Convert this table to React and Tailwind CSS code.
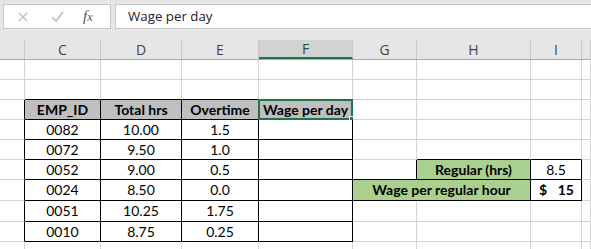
import React from "react";

const COLS = ["B", "C", "D", "E", "F", "G", "H", "I", "J"];
const WIDTHS = "grid-cols-[25px_76px_81px_77px_94px_64px_114px_51px_1fr]";
const ROW_H = ["h-[20px]", "h-[20px]", "h-[20px]", "h-[20px]", "h-[20px]", "h-[20px]", "h-[21px]", "h-[21px]", "h-[20px]", "h-[20px]"];

const table = [
  ["EMP_ID", "Total hrs", "Overtime", "Wage per day"],
  ["0082", "10.00", "1.5", ""],
  ["0072", "9.50", "1.0", ""],
  ["0052", "9.00", "0.5", ""],
  ["0024", "8.50", "0.0", ""],
  ["0051", "10.25", "1.75", ""],
  ["0010", "8.75", "0.25", ""],
];

// cells with a solid black outline (row, col index into COLS)
const boxed = (r, c) => {
  if (r >= 3 && r <= 9 && c >= 1 && c <= 4) return true;
  if (r === 6 && (c === 6 || c === 7)) return true;
  if (r === 7 && c >= 5 && c <= 7) return true;
  return false;
};

function Cell({ r, c }) {
  const right = boxed(r, c) || boxed(r, c + 1);
  const bottom = boxed(r, c) || boxed(r + 1, c);
  // merged G7:H7 has no inner divider
  const merged = r === 7 && c === 5;
  let bg = "bg-white";
  let text = "";

  if (r >= 3 && r <= 9 && c >= 1 && c <= 4) {
    text = table[r - 3][c - 1];
    if (r === 3) bg = "bg-[#bfbfbf] font-bold";
  }
  if (r === 6 && c === 6) {
    bg = "bg-[#a9d08e] font-bold";
    text = "Regular (hrs)";
  }
  if (r === 6 && c === 7) text = "8.5";
  if (merged) {
    bg = "bg-[#a9d08e] font-bold";
    text = "Wage per regular hour";
  }
  if (r === 7 && c === 7) {
    // accounting format: currency sign left, amount right
    return (
      <div className="flex items-center justify-between pl-[8px] pr-[7px] font-bold border-b border-r border-black">
        <span>$</span>
        <span>15</span>
      </div>
    );
  }
  if (r === 7 && c === 6) return null;

  const selected = r === 3 && c === 4;

  return (
    <div
      className={`relative flex items-center justify-center ${bg} border-b border-r whitespace-nowrap ${merged ? "col-span-2" : ""} ${right ? "border-r-black" : "border-r-[#d4d4d4]"} ${bottom ? "border-b-black" : "border-b-[#d4d4d4]"}`}
    >
      {text}
      {selected && (
        <>
          <div className="absolute -left-[1px] -top-[1px] -right-[1px] -bottom-[1px] border-2 border-[#217346]" />
          <div className="absolute -right-[4px] -bottom-[4px] w-[7px] h-[7px] bg-[#217346] border border-white" />
        </>
      )}
    </div>
  );
}

export default function App() {
  const rows = Array.from({ length: 10 }, (_, i) => i + 1);

  return (
    <div className="w-[591px] h-[249px] overflow-hidden bg-white text-black font-['Lato',sans-serif] text-[14px] leading-none">
      {/* formula bar */}
      <div className="h-[40px] bg-[#e6e6e6] flex items-start pt-[4px] pl-[3px] gap-[4px]">
        <div className="w-[108px] h-[25px] bg-white border border-[#c6c6c6] flex items-center">
          <svg width="10" height="10" viewBox="0 0 10 10" className="ml-[14px]">
            <path d="M1 1 L9 9 M9 1 L1 9" stroke="#bdbdbd" strokeWidth="1.3" fill="none" />
          </svg>
          <svg width="13" height="11" viewBox="0 0 13 11" className="ml-[23px]">
            <path d="M1 6 L5 10 L12 1" stroke="#bdbdbd" strokeWidth="1.6" fill="none" />
          </svg>
          <span className="ml-[19px] font-['Liberation_Serif',serif] italic text-[#555] text-[15px]">
            f<span className="text-[12px]">x</span>
          </span>
        </div>
        <div className="flex-1 h-[25px] bg-white border border-[#c6c6c6] border-r-0 flex items-center pl-[12px] font-['Open_Sans',sans-serif] text-[13.3px] text-[#222]">
          Wage per day
        </div>
      </div>

      {/* column headers */}
      <div className={`grid ${WIDTHS} h-[20px] bg-[#e6e6e6] border-b border-[#ababab] font-['Open_Sans',sans-serif] text-[14px] text-[#444]`}>
        {COLS.map((col, i) => (
          <div
            key={col}
            className={`flex items-center justify-center border-r border-[#c8c8c8] ${i === 4 ? "bg-[#d2d2d2] border-b-2 border-b-[#217346] text-[#2e4a3a]" : ""}`}
          >
            {i === 0 || i === 8 ? "" : col}
          </div>
        ))}
      </div>

      {/* sheet grid */}
      {rows.map((r) => (
        <div key={r} className={`grid ${WIDTHS} ${ROW_H[r - 1]}`}>
          {COLS.map((_, c) => (
            <Cell key={c} r={r} c={c} />
          ))}
        </div>
      ))}
    </div>
  );
}
